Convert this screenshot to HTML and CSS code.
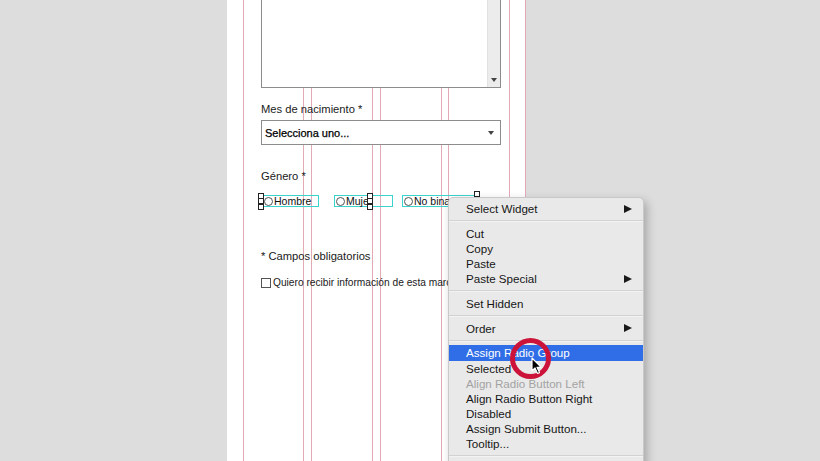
FILE: index.html
```html
<!DOCTYPE html>
<html lang="es">
<head>
    <meta charset="UTF-8">
    <title>Formulario</title>
    <link rel="stylesheet" href="styles.css">
</head>
<body>
    <div class="page">
        <div class="guides">
            <span class="guide" style="left: 16px"></span>
            <span class="guide" style="left: 76px"></span>
            <span class="guide" style="left: 84px"></span>
            <span class="guide" style="left: 145px"></span>
            <span class="guide" style="left: 153px"></span>
            <span class="guide" style="left: 214px"></span>
            <span class="guide" style="left: 221px"></span>
            <span class="guide" style="left: 282px"></span>
            <span class="guide" style="left: 298px"></span>
        </div>

        <div class="form">
            <div class="textarea">
                <div class="scrollbar"><span class="arrow-down"></span></div>
            </div>

            <div class="label label-mes">Mes de nacimiento *</div>
            <div class="select">
                <span>Selecciona uno...</span>
                <span class="arrow-down"></span>
            </div>

            <div class="label label-genero">Género *</div>
            <div class="radios">
                <div class="radio radio-hombre"><span class="dot"></span>Hombre</div>
                <div class="radio radio-mujer"><span class="dot"></span>Mujer</div>
                <div class="radio radio-nb"><span class="dot"></span>No binario</div>
            </div>

            <div class="label label-campos">* Campos obligatorios</div>
            <div class="check-row"><span class="box"></span>Quiero recibir información de esta marca</div>
        </div>

        <!-- selection handles of the radio group -->
        <span class="handle" style="left: 31px; top: 193px"></span>
        <span class="handle" style="left: 31px; top: 198px"></span>
        <span class="handle" style="left: 31px; top: 204px"></span>
        <span class="handle" style="left: 140px; top: 193px"></span>
        <span class="handle" style="left: 140px; top: 198px"></span>
        <span class="handle" style="left: 140px; top: 204px"></span>
        <span class="handle" style="left: 247px; top: 191px"></span>
    </div>

    <div class="menu">
        <div class="item sub">Select Widget</div>
        <div class="sep"></div>
        <div class="item">Cut</div>
        <div class="item">Copy</div>
        <div class="item">Paste</div>
        <div class="item sub">Paste Special</div>
        <div class="sep"></div>
        <div class="item">Set Hidden</div>
        <div class="sep"></div>
        <div class="item sub">Order</div>
        <div class="sep"></div>
        <div class="item active">Assign Radio Group</div>
        <div class="item">Selected</div>
        <div class="item disabled">Align Radio Button Left</div>
        <div class="item">Align Radio Button Right</div>
        <div class="item">Disabled</div>
        <div class="item">Assign Submit Button...</div>
        <div class="item">Tooltip...</div>
        <div class="sep"></div>
    </div>

    <div class="click-ring"></div>
    <svg class="cursor" width="12" height="18" viewBox="0 0 12 18">
        <path d="M1 1 L1 14 L4 11 L6.5 16.5 L8.5 15.6 L6 10.3 L10.2 10.3 Z" fill="#000" stroke="#fff" stroke-width="1.2" stroke-linejoin="round"/>
    </svg>
</body>
</html>
```

FILE: styles.css
```css
body {
    margin: 0;
    background-color: #dddddd;
    font-family: "Liberation Sans", Arial, sans-serif;
    color: #1a1a1a;
    overflow: hidden;
    height: 461px;
}

.page {
    position: relative;
    margin-left: 227px;
    width: 299px;
    height: 461px;
    background-color: #fff;
}

.guides {
    position: absolute;
    inset: 0;
}

.guide {
    position: absolute;
    top: 0;
    bottom: 0;
    width: 1px;
    background-color: #e3aab6;
}

.form {
    position: relative;
    padding-left: 34px;
    width: 240px;
}

.textarea {
    height: 87px;
    border: 1px solid #8c8c8c;
    border-top: none;
    background-color: #fff;
    display: flex;
    justify-content: flex-end;
}

.scrollbar {
    width: 12px;
    background-color: #ececec;
    border-left: 1px solid #e2e2e2;
    display: flex;
    align-items: flex-end;
    justify-content: center;
    padding-bottom: 5px;
}

.arrow-down {
    width: 0;
    height: 0;
    border-left: 3.5px solid transparent;
    border-right: 3.5px solid transparent;
    border-top: 4px solid #444;
}

.label {
    font-size: 11.2px;
    line-height: 14px;
    color: #1a1a1a;
}

.label-mes { margin-top: 14px; }
.label-genero { margin-top: 24px; }
.label-campos { margin-top: 42px; }

.select {
    margin-top: 4px;
    height: 23px;
    border: 1px solid #8c8c8c;
    background-color: #fff;
    display: flex;
    align-items: center;
    justify-content: space-between;
    padding: 0 6px 0 3px;
    font-size: 11px;
    color: #000;
    -webkit-text-stroke: 0.25px #000;
}

.radios {
    margin-top: 12px;
    height: 12px;
    position: relative;
}

.radio {
    position: absolute;
    top: 0;
    height: 10px;
    border: 1px solid #3cd3cf;
    display: flex;
    align-items: center;
    gap: 1px;
    font-size: 10.5px;
    line-height: 10px;
    color: #111;
    padding-left: 1px;
}

.radio-hombre { left: 1px; width: 54px; }
.radio-mujer { left: 73px; width: 56px; }
.radio-nb { left: 141px; width: 74px; }

.radio-nb::after {
    content: "";
    position: absolute;
    left: 74px;
    top: -1px;
    width: 2px;
    height: 1px;
    background-color: #3cd3cf;
}

.dot {
    width: 9px;
    height: 9px;
    border: 1px solid #555;
    border-radius: 50%;
    background-color: #fff;
    box-sizing: border-box;
}

.check-row {
    margin-top: 13px;
    display: flex;
    align-items: center;
    gap: 2px;
    font-size: 10.2px;
    line-height: 14px;
    white-space: nowrap;
}

.box {
    width: 10px;
    height: 10px;
    border: 1px solid #555;
    box-sizing: border-box;
    background-color: #fff;
}

.handle {
    position: absolute;
    width: 4px;
    height: 4px;
    border: 1px solid #222;
    background-color: #fff;
}

.menu {
    position: absolute;
    left: 448px;
    top: 197px;
    width: 196px;
    height: 280px;
    box-sizing: border-box;
    padding-top: 3px;
    background-color: #e9e9e9;
    border: 1px solid #c9c9c9;
    border-radius: 5px;
    box-shadow: 3px 4px 10px rgba(0, 0, 0, 0.25);
    font-size: 11.6px;
    color: #161616;
}

.item {
    height: 15.2px;
    line-height: 15.2px;
    padding-left: 17px;
    padding-right: 11px;
    display: flex;
    justify-content: space-between;
    align-items: center;
    white-space: nowrap;
}

.item.sub::after {
    content: "";
    width: 0;
    height: 0;
    border-top: 4.5px solid transparent;
    border-bottom: 4.5px solid transparent;
    border-left: 8px solid #1a1a1a;
}

.item.active {
    background-color: #2f6ee6;
    color: #fff;
}

.item.disabled { color: #a3a3a3; }

.sep {
    height: 9.5px;
    display: flex;
    align-items: center;
}

.sep::before {
    content: "";
    flex: 1;
    height: 1px;
    background-color: #d2d2d2;
    border-bottom: 1px solid #f3f3f3;
}

.click-ring {
    position: absolute;
    left: 510px;
    top: 338px;
    width: 31px;
    height: 31px;
    border: 5px solid #cc1339;
    border-radius: 50%;
}

.cursor {
    position: absolute;
    left: 531px;
    top: 357px;
}
```
